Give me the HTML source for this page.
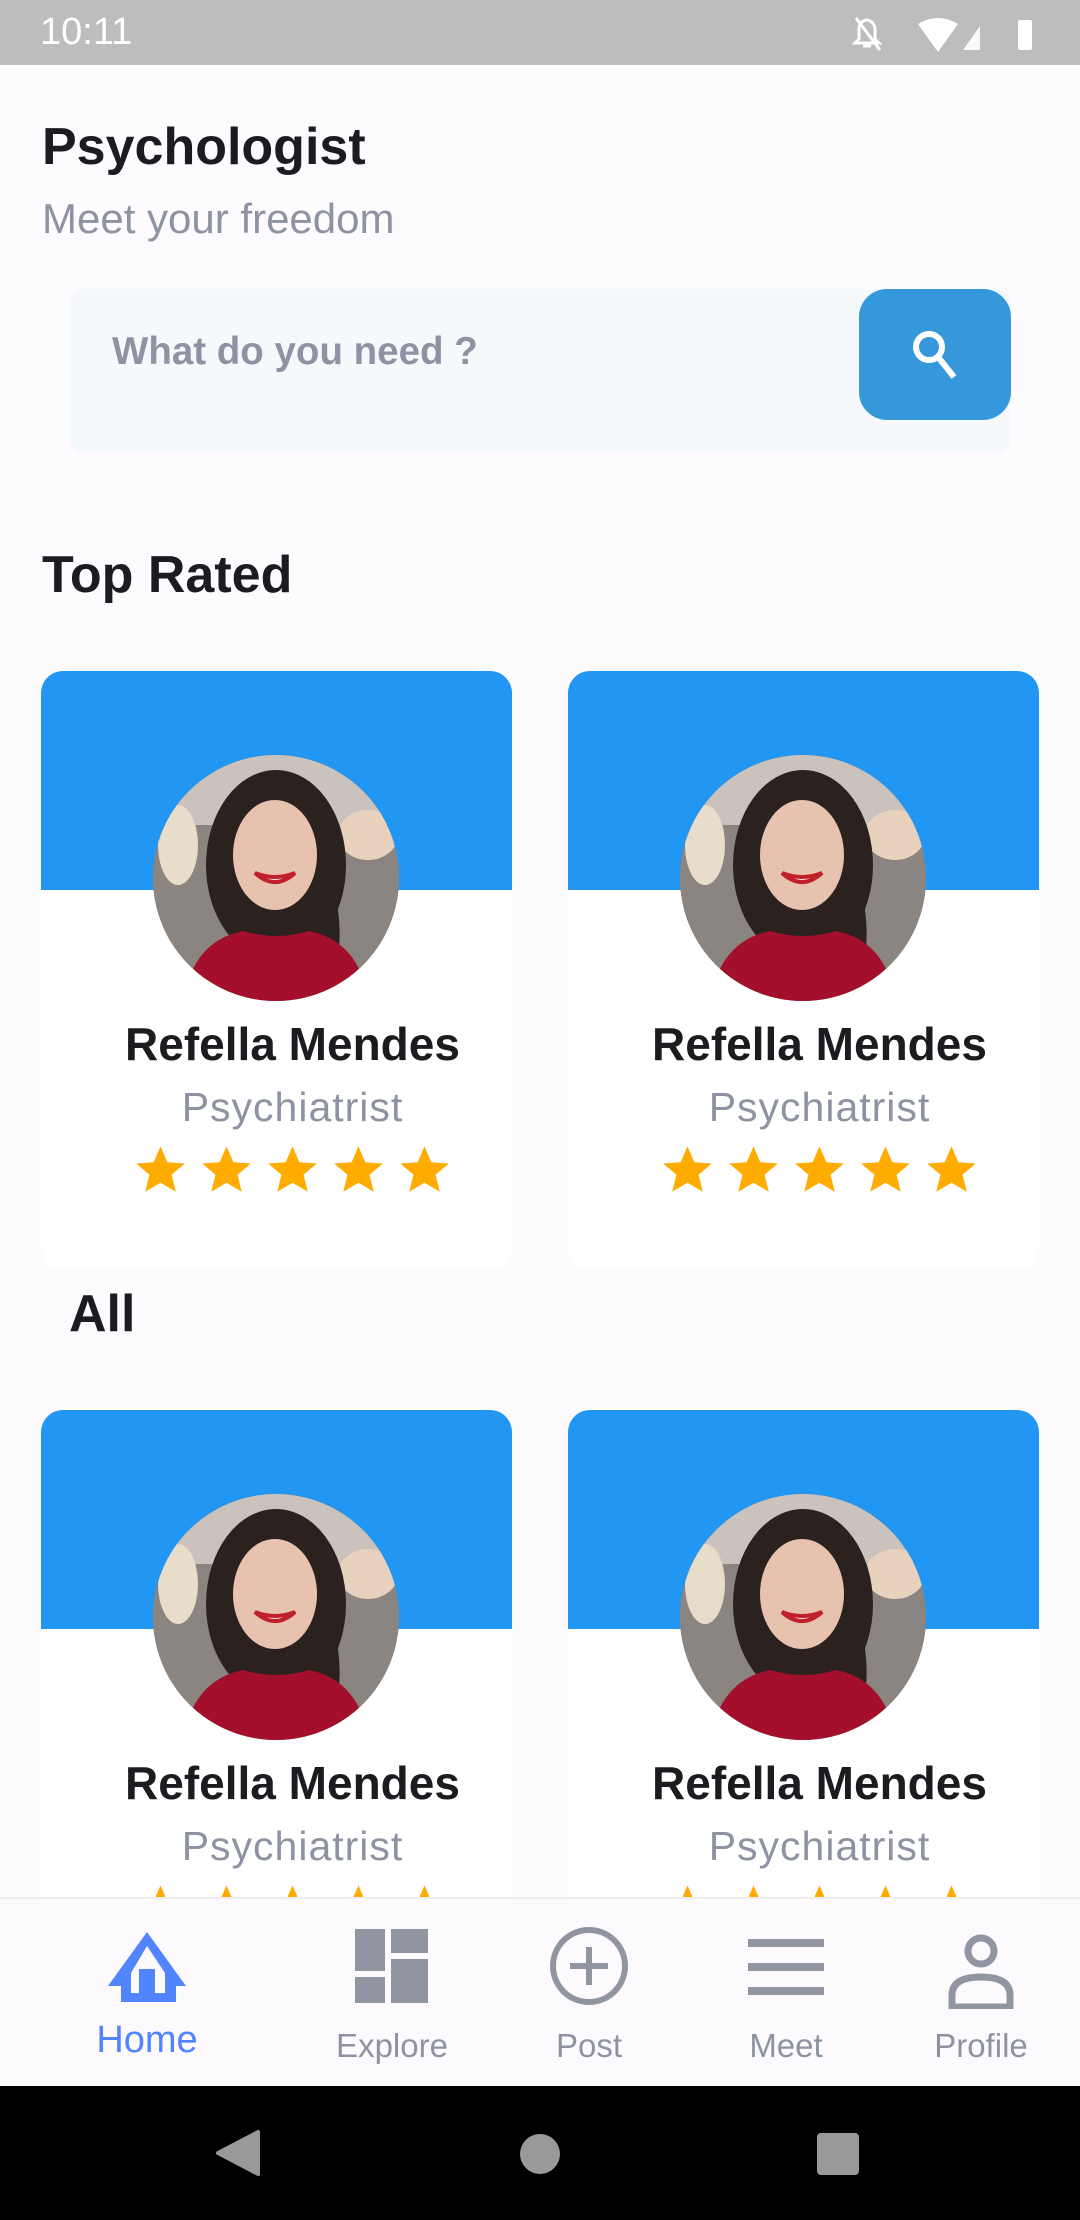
<!DOCTYPE html>
<html><head><meta charset="utf-8"><style>
*{margin:0;padding:0;box-sizing:border-box}
body{width:1080px;height:2220px;overflow:hidden;background:#fefbfe;font-family:"Liberation Sans",sans-serif;position:relative}
.abs{position:absolute}
.status{left:0;top:0;width:1080px;height:65px;background:#bebcbd}
.card{position:absolute;width:471px;height:599px;background:#fff;border-radius:22px;overflow:hidden}
.card .blue{position:absolute;left:0;top:0;width:100%;height:219px;background:#2196f3}
.av{position:absolute;left:112px;top:84px;width:246px;height:246px;border-radius:50%;overflow:hidden;background:#7a7470}
.name{position:absolute;left:32px;width:439px;text-align:center;top:346px;font-size:46px;font-weight:bold;color:#1c1b1f;white-space:nowrap}
.role{position:absolute;left:32px;width:439px;text-align:center;top:413px;font-size:41px;color:#8e93a3;letter-spacing:1px}
.stars{position:absolute;left:93px;top:472px;display:flex;gap:13px}
.nav{left:0;top:1897px;width:1080px;height:189px;background:#fdfafd;border-top:2px solid #f0edf0}
.lbl{position:absolute;font-size:33px;color:#8e93a3;transform:translateX(-50%);white-space:nowrap}
</style></head><body>
<div class="abs status">
 <div class="abs" style="left:40px;top:11px;font-size:38px;color:#fff">10:11</div>
 <svg class="abs" style="left:850px;top:12px" width="200" height="44" viewBox="0 0 200 44">
  <path d="M16 8 a9 9 0 0 1 9 9 v10 l4 4 H5 l4-4 V17 a9 9 0 0 1 7-9z M13 34h8" fill="none" stroke="#fff" stroke-width="3"/>
  <line x1="6" y1="6" x2="30" y2="38" stroke="#fff" stroke-width="3"/>
  <path d="M68 12 q20-12 40 0 l-20 28z" fill="#fff"/>
  <path d="M113 38 L130 14 V38z" fill="#fff" opacity="0.9"/>
  <rect x="168" y="8" width="14" height="30" rx="2" fill="#fff"/>
 </svg>
</div>
<div class="abs" style="left:42px;top:117px;font-size:52px;font-weight:bold;color:#1c1b1f">Psychologist</div>
<div class="abs" style="left:42px;top:195px;font-size:42px;color:#8e93a3">Meet your freedom</div>
<div class="abs" style="left:69px;top:289px;width:942px;height:164px;background:#f5f9fc;border-radius:14px"></div>
<div class="abs" style="left:112px;top:330px;font-size:38.5px;font-weight:bold;color:#8e93a3">What do you need ?</div>
<div class="abs" style="left:859px;top:289px;width:152px;height:131px;background:#3498db;border-radius:28px">
 <svg class="abs" style="left:50px;top:38px" width="54" height="56" viewBox="0 0 54 56"><circle cx="20" cy="20" r="13" fill="none" stroke="#fff" stroke-width="6"/><line x1="29" y1="30" x2="45" y2="50" stroke="#fff" stroke-width="6"/></svg>
</div>
<div class="abs" style="left:42px;top:545px;font-size:52px;font-weight:bold;color:#1c1b1f">Top Rated</div>
<div class="abs" style="left:69px;top:1284px;font-size:52px;font-weight:bold;color:#1c1b1f">All</div>

<svg width="0" height="0" style="position:absolute">
 <defs>
  <symbol id="face" viewBox="0 0 246 246">
   <rect width="246" height="246" fill="#8a8580"/>
   <rect x="0" y="0" width="246" height="70" fill="#c9c2bd"/>
   <ellipse cx="25" cy="90" rx="20" ry="40" fill="#e8dccb"/>
   <ellipse cx="215" cy="80" rx="30" ry="25" fill="#e8d2be"/>
   <ellipse cx="123" cy="110" rx="70" ry="95" fill="#2b211f"/>
   <path d="M160 90 q40 60 20 140 l-40 0z" fill="#2b211f"/>
   <ellipse cx="122" cy="100" rx="42" ry="55" fill="#e7c2ae"/>
   <path d="M102 118 q20 18 40 0 q-20 8 -40 0z" fill="#fff" stroke="#c0202a" stroke-width="4"/>
   <path d="M30 246 q10-60 60-70 q33 10 66 0 q50 10 60 70z" fill="#a4102c"/>
  </symbol>
  <symbol id="star" viewBox="0 0 24 24"><path d="M12 1.5l3.1 7.2 7.9.6-6 5.1 1.9 7.7L12 18l-6.9 4.1 1.9-7.7-6-5.1 7.9-.6z" fill="#ffab00"/></symbol>
 </defs>
</svg>

<div class="card" style="left:41px;top:671px"><div class="blue"></div><svg class="av" viewBox="0 0 246 246"><use href="#face"/></svg><div class="name">Refella Mendes</div><div class="role">Psychiatrist</div><div class="stars"><svg width="53" height="53"><use href="#star"/></svg><svg width="53" height="53"><use href="#star"/></svg><svg width="53" height="53"><use href="#star"/></svg><svg width="53" height="53"><use href="#star"/></svg><svg width="53" height="53"><use href="#star"/></svg></div></div>
<div class="card" style="left:568px;top:671px"><div class="blue"></div><svg class="av" viewBox="0 0 246 246"><use href="#face"/></svg><div class="name">Refella Mendes</div><div class="role">Psychiatrist</div><div class="stars"><svg width="53" height="53"><use href="#star"/></svg><svg width="53" height="53"><use href="#star"/></svg><svg width="53" height="53"><use href="#star"/></svg><svg width="53" height="53"><use href="#star"/></svg><svg width="53" height="53"><use href="#star"/></svg></div></div>
<div class="card" style="left:41px;top:1410px"><div class="blue"></div><svg class="av" viewBox="0 0 246 246"><use href="#face"/></svg><div class="name">Refella Mendes</div><div class="role">Psychiatrist</div><div class="stars"><svg width="53" height="53"><use href="#star"/></svg><svg width="53" height="53"><use href="#star"/></svg><svg width="53" height="53"><use href="#star"/></svg><svg width="53" height="53"><use href="#star"/></svg><svg width="53" height="53"><use href="#star"/></svg></div></div>
<div class="card" style="left:568px;top:1410px"><div class="blue"></div><svg class="av" viewBox="0 0 246 246"><use href="#face"/></svg><div class="name">Refella Mendes</div><div class="role">Psychiatrist</div><div class="stars"><svg width="53" height="53"><use href="#star"/></svg><svg width="53" height="53"><use href="#star"/></svg><svg width="53" height="53"><use href="#star"/></svg><svg width="53" height="53"><use href="#star"/></svg><svg width="53" height="53"><use href="#star"/></svg></div></div>

<div class="abs nav">
 <svg class="abs" style="left:107px;top:30px" width="80" height="80" viewBox="0 0 80 80"><path d="M40 3 L79 57 H69 V73 H14 V57 H1 Z M40 17 L24 44 V64 H32 V40 H48 V64 H58 V44 Z" fill="#5284ff" fill-rule="evenodd"/></svg>
 <svg class="abs" style="left:355px;top:30px" width="74" height="74" viewBox="0 0 74 74"><rect x="0" y="0" width="30" height="42" fill="#9195a2"/><rect x="0" y="48" width="30" height="26" fill="#9195a2"/><rect x="36" y="0" width="37" height="24" fill="#9195a2"/><rect x="36" y="30" width="37" height="44" fill="#9195a2"/></svg>
 <svg class="abs" style="left:548px;top:26px" width="82" height="82" viewBox="0 0 82 82"><circle cx="41" cy="41" r="36" fill="none" stroke="#9195a2" stroke-width="6"/><path d="M41 22V60M22 41H60" stroke="#9195a2" stroke-width="6"/></svg>
 <svg class="abs" style="left:748px;top:40px" width="76" height="56" viewBox="0 0 76 56"><rect x="0" y="0" width="76" height="8" fill="#9195a2"/><rect x="0" y="24" width="76" height="8" fill="#9195a2"/><rect x="0" y="48" width="76" height="8" fill="#9195a2"/></svg>
 <svg class="abs" style="left:948px;top:34px" width="66" height="76" viewBox="0 0 66 76"><circle cx="33" cy="18" r="13" fill="none" stroke="#9195a2" stroke-width="7"/><path d="M4 74 V62 Q4 44 33 44 Q62 44 62 62 V74 Z" fill="none" stroke="#9195a2" stroke-width="7"/></svg>
 <div class="lbl" style="left:147px;top:120px;color:#5284ff;font-size:38px">Home</div>
 <div class="lbl" style="left:392px;top:128px">Explore</div>
 <div class="lbl" style="left:589px;top:128px">Post</div>
 <div class="lbl" style="left:786px;top:128px">Meet</div>
 <div class="lbl" style="left:981px;top:128px">Profile</div>
</div>
<div class="abs" style="left:0;top:2086px;width:1080px;height:134px;background:#000">
 <svg class="abs" style="left:210px;top:42px" width="50" height="50" viewBox="0 0 50 50"><path d="M48 4 V46 L8 25 Z" fill="#999" stroke="#999" stroke-width="4" stroke-linejoin="round"/></svg>
 <div class="abs" style="left:520px;top:48px;width:40px;height:40px;border-radius:50%;background:#999"></div>
 <div class="abs" style="left:817px;top:47px;width:42px;height:42px;border-radius:4px;background:#999"></div>
</div>
</body></html>
